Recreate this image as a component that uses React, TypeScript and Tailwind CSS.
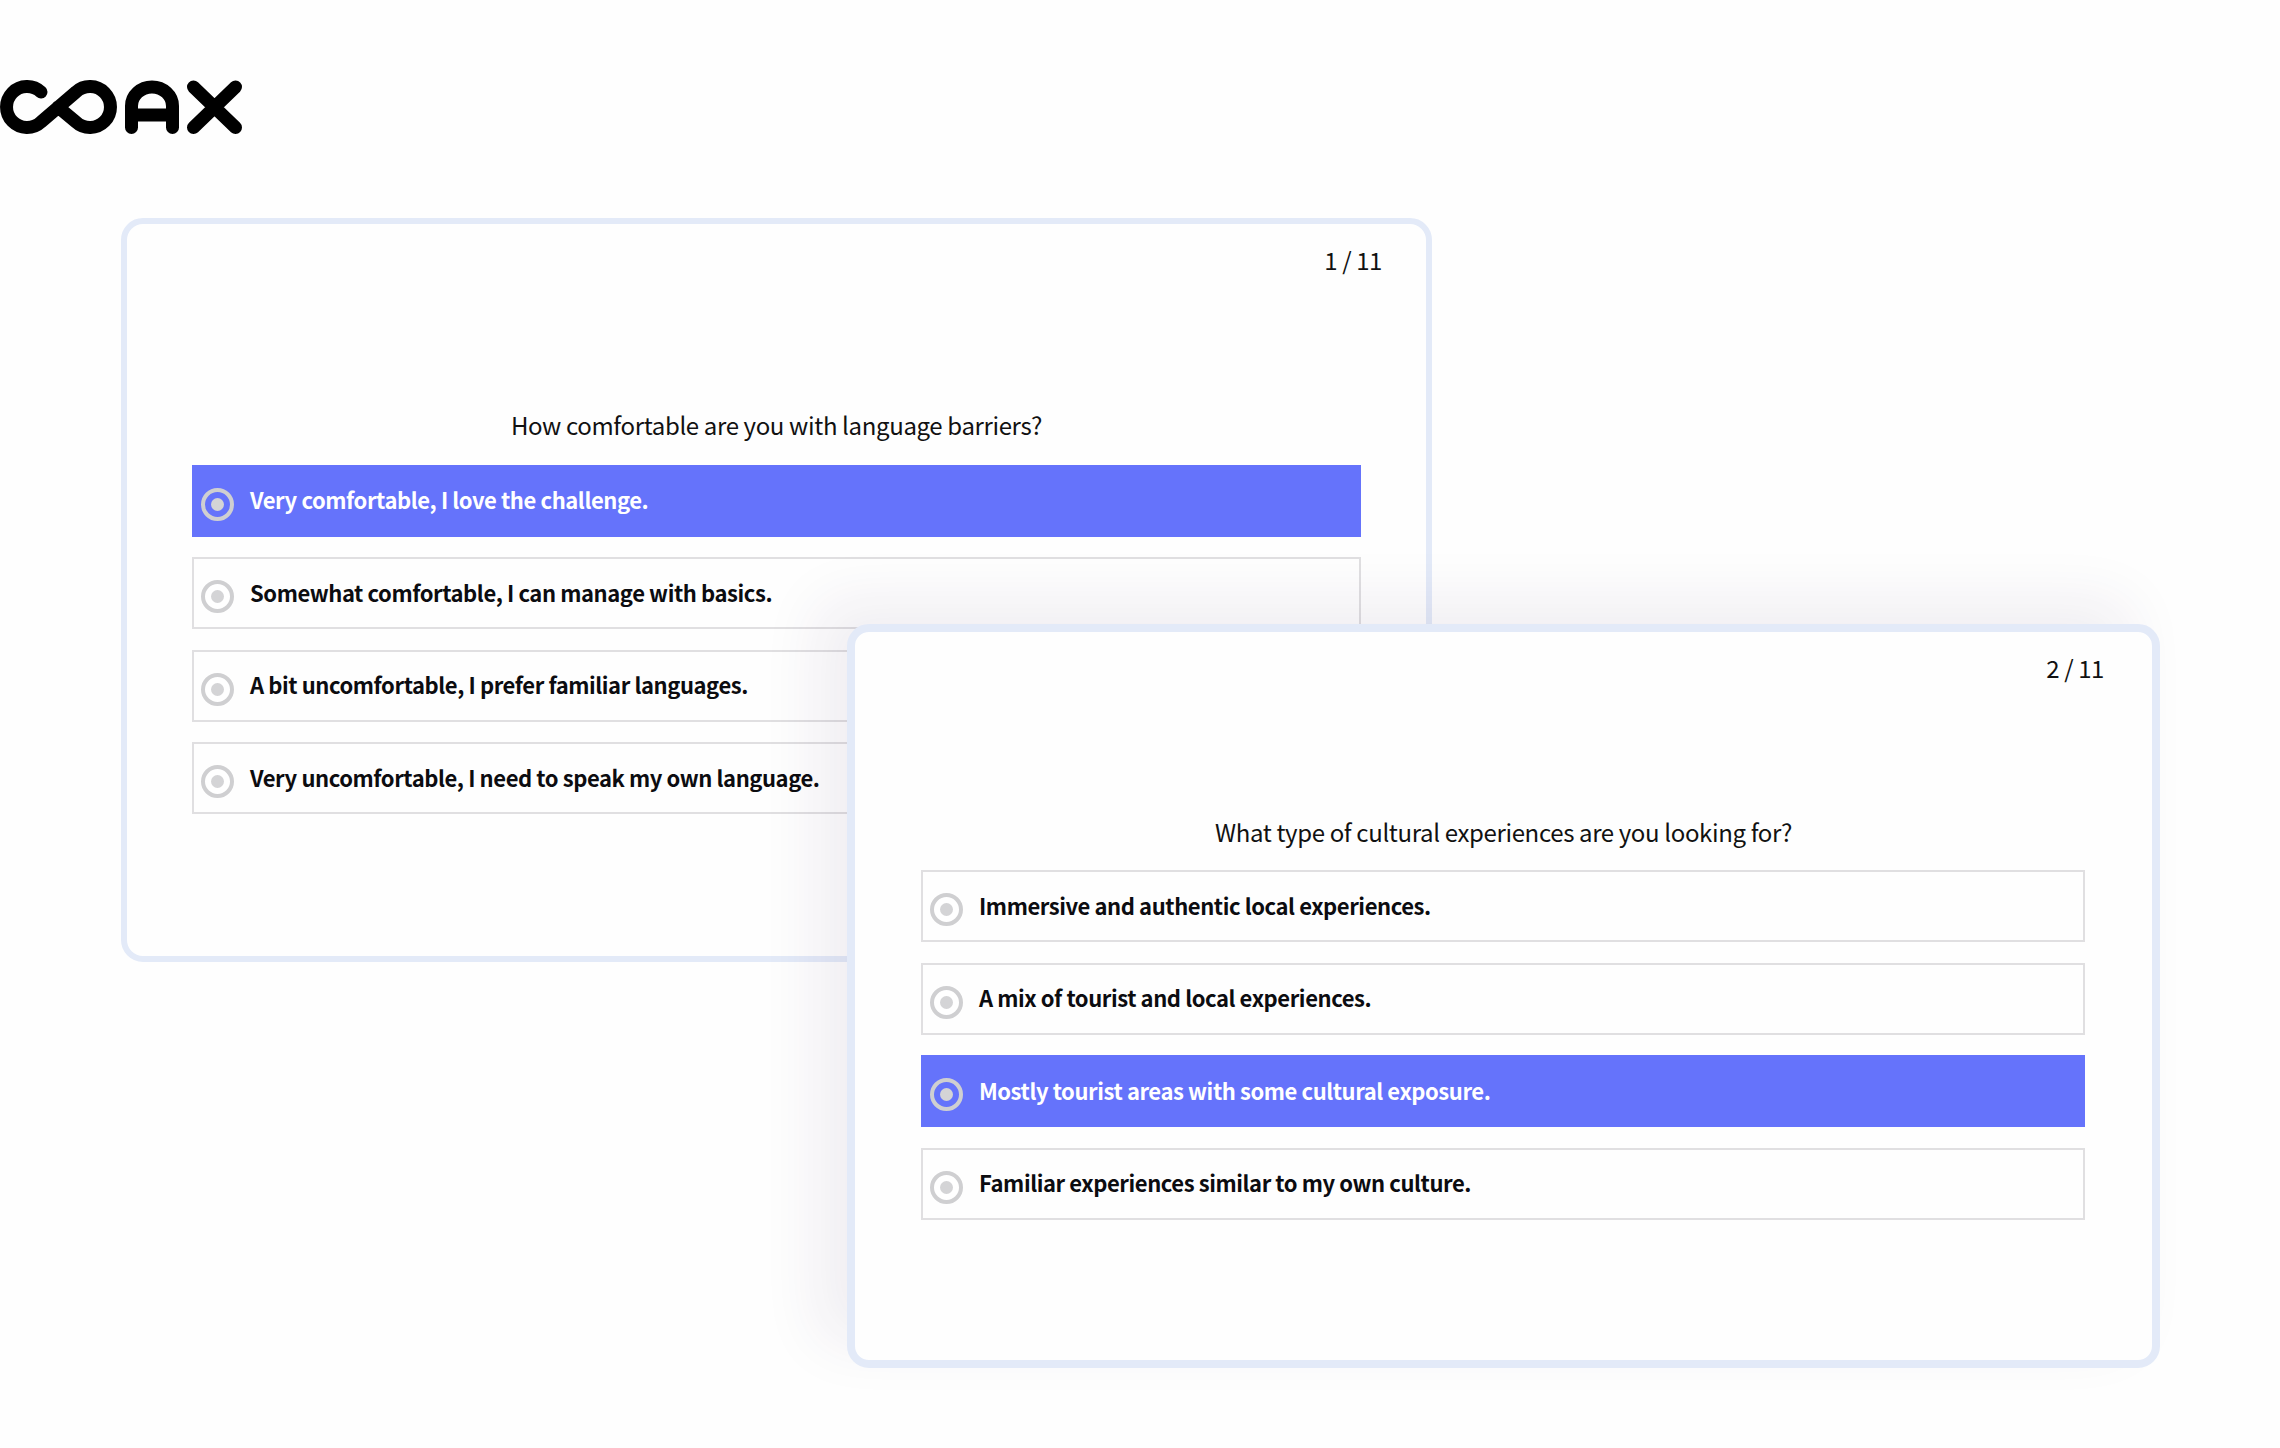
const font = "font-['Noto_Sans_CJK_KR','Noto_Sans',sans-serif]";

const first = {
  step: "1 / 11",
  question: "How comfortable are you with language barriers?",
  selected: 0,
  options: [
    "Very comfortable, I love the challenge.",
    "Somewhat comfortable, I can manage with basics.",
    "A bit uncomfortable, I prefer familiar languages.",
    "Very uncomfortable, I need to speak my own language.",
  ],
};

const second = {
  step: "2 / 11",
  question: "What type of cultural experiences are you looking for?",
  selected: 2,
  options: [
    "Immersive and authentic local experiences.",
    "A mix of tourist and local experiences.",
    "Mostly tourist areas with some cultural exposure.",
    "Familiar experiences similar to my own culture.",
  ],
};

function Logo() {
  return (
    <svg width="243" height="55" viewBox="0 80 243 55" fill="none" stroke="#000" strokeWidth="13" strokeLinecap="round" strokeLinejoin="round" className="block">
      <path d="M41 92A20.5 20.5 0 1 0 41 122L76 92A20.5 20.5 0 1 1 76 122L58 107" />
      <path d="M131.5 127.5V106A20.5 19 0 0 1 172.5 106V127.5M131.5 115H172.5" strokeLinecap="round" />
      <path d="M193.5 87L235.5 127.5M235.5 87L193.5 127.5" />
    </svg>
  );
}

function Radio({ active }: { active: boolean }) {
  return (
    <span className={`mt-[7px] flex h-[33px] w-[33px] shrink-0 items-center justify-center rounded-full border-[4px] border-[#cfcfd1] ${active ? "bg-transparent" : "bg-white"} blur-[0.5px]`}>
      <span className="h-[13px] w-[13px] rounded-full bg-[#d4d4d6]" />
    </span>
  );
}

function Option({ label, active }: { label: string; active: boolean }) {
  return (
    <div className={`flex h-[72px] items-center gap-[16px] border-2 pl-[7px] ${active ? "border-[#6573fb] bg-[#6573fb] text-white" : "border-[#e0dfe1] bg-[#fefefe] text-[#0c0c10]"}`}>
      <Radio active={active} />
      <span className="pb-[3px] text-[22px] leading-none font-semibold tracking-[-0.42px]">{label}</span>
    </div>
  );
}

function Card({ data, className, stepClass, titleClass, listClass }: { data: typeof first; className: string; stepClass: string; titleClass: string; listClass: string }) {
  return (
    <section className={`col-start-1 row-start-1 flex h-[744px] flex-col rounded-[22px] border-[#e3eaf8] bg-[#fefefe] ${className}`}>
      <div className={`pt-[16px] text-right text-[24px] leading-[40px] tracking-[-0.4px] text-[#111] ${stepClass}`}>{data.step}</div>
      <h2 className={`text-center text-[24px] leading-[40px] font-normal tracking-[-0.36px] text-[#111] ${titleClass}`}>{data.question}</h2>
      <div className={`flex flex-col gap-[20.5px] ${listClass}`}>
        {data.options.map((o, i) => (
          <Option key={o} label={o} active={i === data.selected} />
        ))}
      </div>
    </section>
  );
}

export default function App() {
  return (
    <div className={`h-[1448px] w-[2280px] overflow-hidden bg-[#fefefe] pt-[80px] ${font}`}>
      <Logo />
      <div className="mt-[83px] grid">
        <Card
          data={first}
          className="ml-[121px] w-[1311px] border-[6px]"
          stepClass="pr-[44px]"
          titleClass="mt-[125px]"
          listClass="mt-[19.5px] mr-[65px] ml-[65px]"
        />
        <Card
          data={second}
          className="mt-[406px] ml-[847px] w-[1313px] border-[8px] shadow-[-30px_-24px_60px_rgba(60,30,90,0.07)]"
          stepClass="pr-[48px]"
          titleClass="mt-[124px]"
          listClass="mt-[18px] mr-[67px] ml-[66px]"
        />
      </div>
    </div>
  );
}
